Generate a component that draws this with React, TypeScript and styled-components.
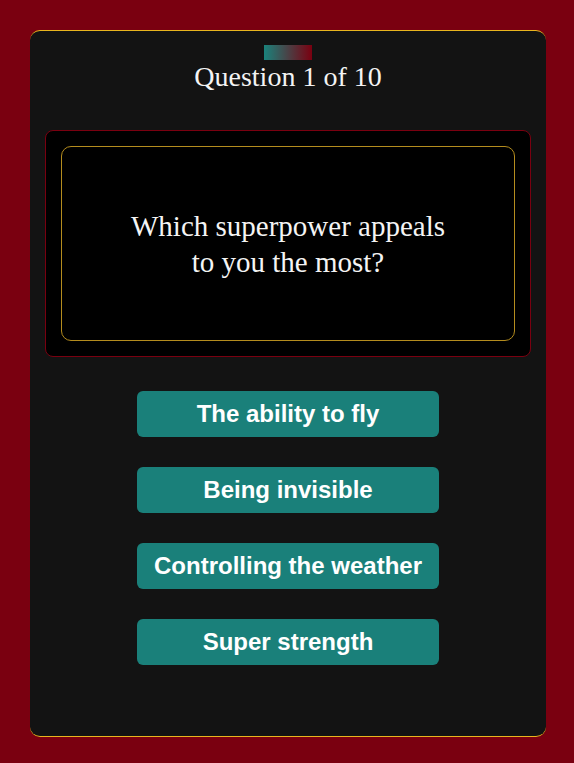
import React from 'react';
import styled, { createGlobalStyle } from 'styled-components';

const GlobalStyle = createGlobalStyle`
  html, body {
    margin: 0;
    padding: 0;
    background: #7a0010;
  }
  body {
    font-family: "Liberation Serif", serif;
  }
`;

const Page = styled.div`
  padding: 30px 28px 27px 30px;
`;

const Card = styled.main`
  background: #131313;
  border-top: 1px solid #e8b51e;
  border-bottom: 1px solid #e8b51e;
  border-radius: 10px;
  padding: 14px 15px 71px;
  display: flex;
  flex-direction: column;
  align-items: center;
`;

const Progress = styled.div`
  width: 48px;
  height: 15px;
  background: linear-gradient(90deg, #1a837c 0%, #7a0010 100%);
`;

const Title = styled.h1`
  margin: 0;
  font-family: "Liberation Serif", serif;
  font-weight: 400;
  font-size: 28px;
  line-height: 34px;
  color: #f4f4f4;
`;

const QuestionFrame = styled.section`
  align-self: stretch;
  margin-top: 36px;
  background: #000;
  border: 1px solid #7a0010;
  border-radius: 8px;
  padding: 15px;
`;

const QuestionInner = styled.div`
  height: 193px;
  border: 1px solid #b48c1e;
  border-radius: 10px;
  display: flex;
  align-items: center;
  justify-content: center;
`;

const QuestionText = styled.h2`
  margin: 0;
  max-width: 330px;
  text-align: center;
  font-family: "Liberation Serif", serif;
  font-weight: 400;
  font-size: 29px;
  line-height: 36px;
  color: #f4f4f4;
`;

const Answers = styled.div`
  margin-top: 34px;
  display: flex;
  flex-direction: column;
  gap: 30px;
`;

const AnswerButton = styled.button`
  width: 302px;
  height: 46px;
  border: none;
  border-radius: 6px;
  background: #1a807a;
  color: #fff;
  font-family: "Liberation Sans", Arial, sans-serif;
  font-weight: 700;
  font-size: 24px;
  cursor: pointer;
  padding: 0;
`;

const answers = [
  'The ability to fly',
  'Being invisible',
  'Controlling the weather',
  'Super strength',
];

const App: React.FC = () => (
  <>
    <GlobalStyle />
    <Page>
      <Card>
        <Progress />
        <Title>Question 1 of 10</Title>
        <QuestionFrame>
          <QuestionInner>
            <QuestionText>Which superpower appeals to you the most?</QuestionText>
          </QuestionInner>
        </QuestionFrame>
        <Answers>
          {answers.map((a) => (
            <AnswerButton key={a}>{a}</AnswerButton>
          ))}
        </Answers>
      </Card>
    </Page>
  </>
);

export default App;
